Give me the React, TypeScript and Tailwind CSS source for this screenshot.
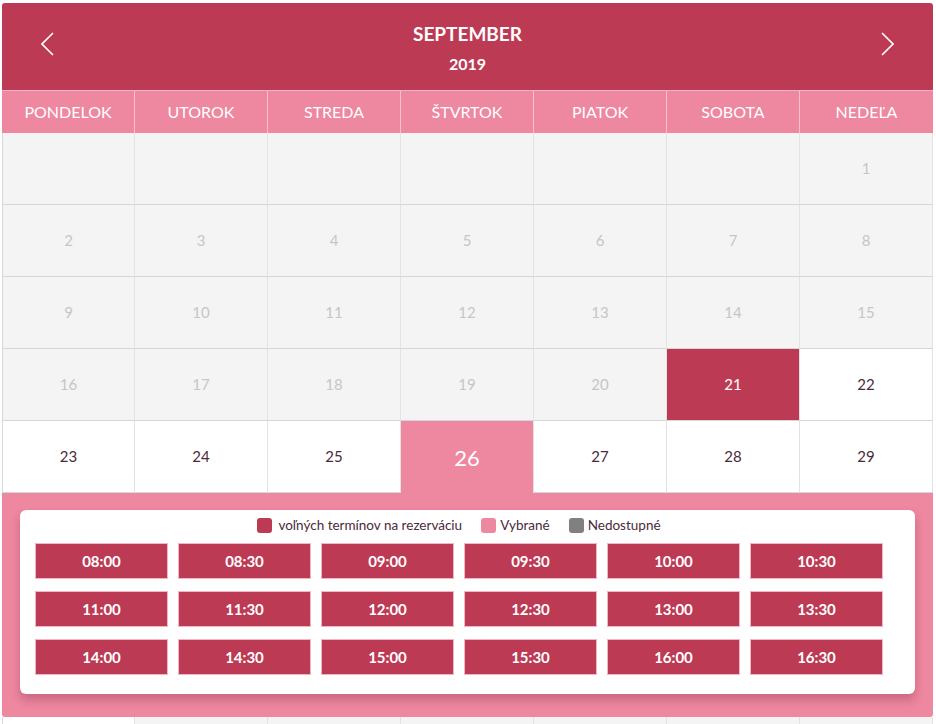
const days = ["PONDELOK", "UTOROK", "STREDA", "ŠTVRTOK", "PIATOK", "SOBOTA", "NEDEĽA"];

type Cell = { n?: number; kind: "off" | "free" | "booked" | "selected" };

const rows: Cell[][] = [
  [
    { kind: "off" },
    { kind: "off" },
    { kind: "off" },
    { kind: "off" },
    { kind: "off" },
    { kind: "off" },
    { n: 1, kind: "off" },
  ],
  [2, 3, 4, 5, 6, 7, 8].map((n) => ({ n, kind: "off" as const })),
  [9, 10, 11, 12, 13, 14, 15].map((n) => ({ n, kind: "off" as const })),
  [
    ...[16, 17, 18, 19, 20].map((n) => ({ n, kind: "off" as const })),
    { n: 21, kind: "booked" },
    { n: 22, kind: "free" },
  ],
  [23, 24, 25, 26, 27, 28, 29].map((n) => ({
    n,
    kind: n === 26 ? ("selected" as const) : ("free" as const),
  })),
];

// next week row, only its top edge shows below the slot panel
const lastRow: Cell[] = [
  { kind: "free" },
  { kind: "off" },
  { kind: "off" },
  { kind: "off" },
  { kind: "off" },
  { kind: "off" },
  { kind: "off" },
];

const slots = [
  "08:00", "08:30", "09:00", "09:30", "10:00", "10:30",
  "11:00", "11:30", "12:00", "12:30", "13:00", "13:30",
  "14:00", "14:30", "15:00", "15:30", "16:00", "16:30",
];

function DayCell({ cell, col }: { cell: Cell; col: number }) {
  const base = "flex h-[72px] items-center justify-center border-r border-b border-r-[#e3e3e3] border-b-[#d6d6d6]";
  const left = col === 0 ? " border-l border-l-[#d9d9d9]" : "";
  if (cell.kind === "off")
    return <div className={base + left + " bg-[#f4f4f4] text-[15px] text-[#c6c6c6]"}>{cell.n}</div>;
  if (cell.kind === "booked")
    return <div className={base + left + " bg-[#bc3a53] text-[15px] text-white"}>{cell.n}</div>;
  if (cell.kind === "selected")
    return (
      <div className="flex h-[72px] items-center justify-center border-r border-r-[#e3e3e3] bg-[#ee87a0] text-[22px] text-white">
        {cell.n}
      </div>
    );
  return <div className={base + left + " bg-white text-[15px] text-[#4b2a3c]"}>{cell.n}</div>;
}

export default function App() {
  return (
    <div className="h-screen overflow-hidden bg-white pt-[3px] font-['Lato','Open_Sans',sans-serif]">
      <div className="ml-[2px] w-[931px]">
        <div className="flex h-[87px] items-center justify-between rounded-t-[3px] bg-[#bc3a53] px-[39px] text-white">
          <svg className="mb-[5px]" width="13" height="24" viewBox="0 0 13 24" fill="none" stroke="white" strokeWidth="1.6">
            <polyline points="12,1 1,12 12,23" />
          </svg>
          <div className="flex flex-col items-center pt-[3px]">
            <span className="text-[19px] font-bold leading-[24px]">SEPTEMBER</span>
            <span className="mt-[8px] text-[16px] font-bold leading-[20px]">2019</span>
          </div>
          <svg className="mb-[5px]" width="13" height="24" viewBox="0 0 13 24" fill="none" stroke="white" strokeWidth="1.6">
            <polyline points="1,1 12,12 1,23" />
          </svg>
        </div>

        <div className="grid grid-cols-7 border-t border-t-[#f3b3c3] bg-[#ee87a0]">
          {days.map((d, i) => (
            <div
              key={d}
              className={
                "flex h-[42px] items-center justify-center text-[16px] text-white" +
                (i < 6 ? " border-r border-r-[#f6c3cf]" : "")
              }
            >
              {d}
            </div>
          ))}
        </div>

        {rows.map((r, ri) => (
          <div key={ri} className="grid grid-cols-7">
            {r.map((c, ci) => (
              <DayCell key={ci} cell={c} col={ci} />
            ))}
          </div>
        ))}

        <div className="rounded-b-[3px] bg-[#ee87a0] px-[18px] pt-[17px] pb-[23px]">
          <div className="rounded-[6px] bg-white pt-[5px] pb-[19px] pl-[15px] shadow-[0_6px_10px_rgba(120,30,60,0.3)]">
            <div className="flex w-[848px] items-center justify-center gap-[19px] text-[13.5px] text-[#4b2a3c]">
              <div className="flex items-center gap-[6px]">
                <span className="h-[15px] w-[15px] rounded-[3px] bg-[#bc3a53]" />
                <span>voľných termínov na rezerváciu</span>
              </div>
              <div className="flex items-center gap-[4px]">
                <span className="h-[15px] w-[15px] rounded-[3px] bg-[#ee87a0]" />
                <span>Vybrané</span>
              </div>
              <div className="flex items-center gap-[4px]">
                <span className="h-[15px] w-[15px] rounded-[3px] bg-[#808080]" />
                <span>Nedostupné</span>
              </div>
            </div>
            <div className="mt-[8px] grid w-[848px] grid-cols-6 gap-x-[10px] gap-y-[12px]">
              {slots.map((s) => (
                <button
                  key={s}
                  className="h-[36px] border border-[#f2b7c4] bg-[#bc3a53] text-[15px] font-bold text-white"
                >
                  {s}
                </button>
              ))}
            </div>
          </div>
        </div>

        <div className="grid grid-cols-7">
          {lastRow.map((c, ci) => (
            <DayCell key={ci} cell={c} col={ci} />
          ))}
        </div>
      </div>
    </div>
  );
}
